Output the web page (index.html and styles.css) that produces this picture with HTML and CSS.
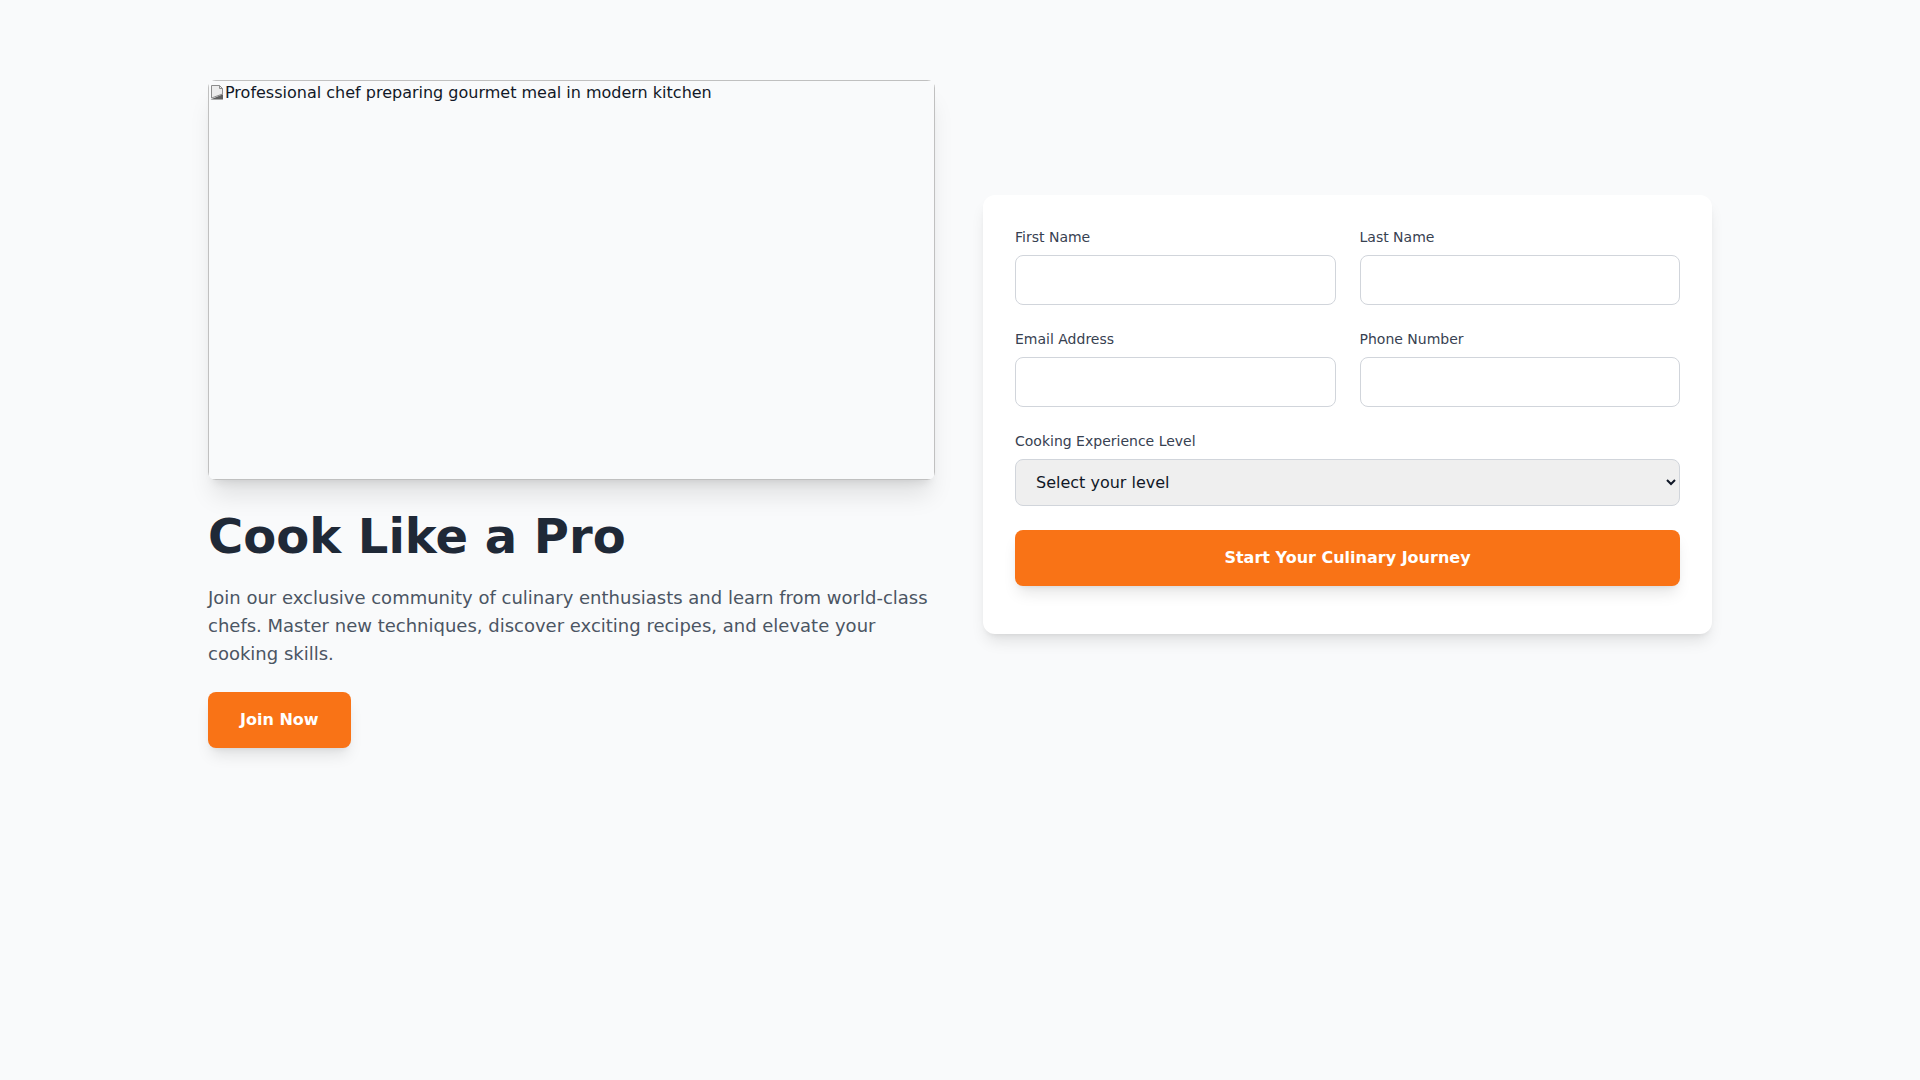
FILE: index.html
```html
<!DOCTYPE html>
<html lang="en">
<head>
    <meta charset="UTF-8">
    <title>Cook Like a Pro</title>
    <link rel="stylesheet" href="styles.css">
</head>
<body>
    <main class="page">
        <section class="hero">
            <div class="hero-left">
                <div class="hero-img">
                    <div class="img-broken">
                        <svg class="broken-icon" width="16" height="16" viewBox="0 0 16 16">
                            <path d="M2.5 1.5h8l3 3v5.5l-11 4z" fill="#ececec" stroke="#8c8c8c"/>
                            <path d="M10.5 1.5v3h3" fill="none" stroke="#8c8c8c"/>
                            <path d="M1.5 15.5l12.5-5.2v5.2z" fill="#5f5f5f"/>
                        </svg><span>Professional chef preparing gourmet meal in modern kitchen</span>
                    </div>
                </div>
                <h1 class="title">Cook Like a Pro</h1>
                <p class="lead">Join our exclusive community of culinary enthusiasts and learn from world-class chefs. Master new techniques, discover exciting recipes, and elevate your cooking skills.</p>
                <button class="btn btn-join">Join Now</button>
            </div>

            <div class="card">
                <form class="signup">
                    <div class="row">
                        <div class="form-group">
                            <label for="firstName">First Name</label>
                            <input type="text" id="firstName">
                        </div>
                        <div class="form-group">
                            <label for="lastName">Last Name</label>
                            <input type="text" id="lastName">
                        </div>
                    </div>
                    <div class="row">
                        <div class="form-group">
                            <label for="email">Email Address</label>
                            <input type="email" id="email">
                        </div>
                        <div class="form-group">
                            <label for="phone">Phone Number</label>
                            <input type="tel" id="phone">
                        </div>
                    </div>
                    <div class="form-group">
                        <label for="level">Cooking Experience Level</label>
                        <select id="level">
                            <option>Select your level</option>
                            <option>Beginner</option>
                            <option>Intermediate</option>
                            <option>Advanced</option>
                            <option>Professional</option>
                        </select>
                    </div>
                    <button type="button" class="btn btn-submit">Start Your Culinary Journey</button>
                </form>
            </div>
        </section>
    </main>
</body>
</html>
```

FILE: styles.css
```css
body {
    margin: 0;
    font-family: "DejaVu Sans", Verdana, sans-serif;
    background-color: #f9fafb;
    color: #1f2937;
}
.page {
    max-width: 1536px;
    margin: 0 auto;
    padding: 80px 16px;
    box-sizing: border-box;
}
.hero {
    display: grid;
    grid-template-columns: 727px 1fr;
    gap: 48px;
    align-items: center;
}
.hero-img {
    height: 400px;
    border-radius: 8px;
    overflow: hidden;
    box-shadow: 0 20px 25px -5px rgba(0, 0, 0, 0.1), 0 8px 10px -6px rgba(0, 0, 0, 0.1);
    margin-bottom: 32px;
}
.img-broken {
    height: 100%;
    box-sizing: border-box;
    border: 1px solid #c0c0c0;
    padding-top: 2px;
    font-size: 16px;
    line-height: 19px;
    color: #111827;
}
.broken-icon {
    vertical-align: top;
    margin-top: 1px;
}
.title {
    margin: 0 0 24px;
    font-size: 48px;
    line-height: 1;
    font-weight: bold;
    color: #1f2937;
}
.lead {
    margin: 0 0 24px;
    font-size: 18px;
    line-height: 28px;
    color: #4b5563;
}
.btn {
    font-family: inherit;
    font-size: 16px;
    line-height: 24px;
    font-weight: bold;
    color: white;
    background-color: #f97316;
    border: none;
    border-radius: 8px;
    padding: 16px 32px;
    cursor: pointer;
    box-shadow: 0 10px 15px -3px rgba(0, 0, 0, 0.1), 0 4px 6px -4px rgba(0, 0, 0, 0.1);
}
.btn:hover {
    background-color: #ea580c;
}
.card {
    background-color: white;
    border-radius: 12px;
    padding: 32px 32px 48px;
    box-shadow: 0 10px 15px -3px rgba(0, 0, 0, 0.1), 0 4px 6px -4px rgba(0, 0, 0, 0.1);
}
.signup {
    display: flex;
    flex-direction: column;
    gap: 24px;
}
.row {
    display: grid;
    grid-template-columns: 1fr 1fr;
    gap: 24px;
}
.form-group label {
    display: block;
    font-size: 14px;
    line-height: 20px;
    color: #374151;
    margin-bottom: 8px;
}
.form-group input {
    display: block;
    width: 100%;
    height: 50px;
    box-sizing: border-box;
    padding: 12px 16px;
    font-family: inherit;
    font-size: 16px;
    border: 1px solid #d1d5db;
    border-radius: 8px;
    background-color: white;
}
.form-group select {
    display: block;
    width: 100%;
    height: 47px;
    box-sizing: border-box;
    padding: 0 16px;
    font-family: inherit;
    font-size: 16px;
    color: #111827;
    border: 1px solid #d1d5db;
    border-radius: 8px;
    background-color: #efefef;
}
.btn-submit {
    width: 100%;
}
```
